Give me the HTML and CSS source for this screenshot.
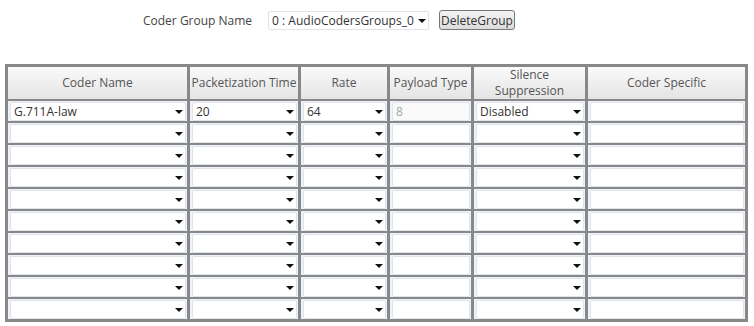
FILE: index.html
```html
<!DOCTYPE html>
<html lang="en">
<head>
  <meta charset="UTF-8" />
  <title>Coder Groups</title>
  <link rel="stylesheet" href="styles.css">
</head>
<body>
  <div class="group-bar">
    <span class="group-label">Coder Group Name</span>
    <div class="sel group-sel"><select><option>0 : AudioCodersGroups_0</option></select></div>
    <button class="del-btn">DeleteGroup</button>
  </div>

  <table class="coders">
    <thead>
      <tr>
        <th class="c-name">Coder Name</th>
        <th class="c-ptime">Packetization Time</th>
        <th class="c-rate">Rate</th>
        <th class="c-payload">Payload Type</th>
        <th class="c-silence">Silence<br>Suppression</th>
        <th class="c-spec">Coder Specific</th>
      </tr>
    </thead>
    <tbody id="rows">
      <tr>
        <td><div class="sel"><select><option>G.711A-law</option></select></div></td>
        <td><div class="sel"><select><option>20</option></select></div></td>
        <td><div class="sel"><select><option>64</option></select></div></td>
        <td><input class="fld" type="text" value="8" disabled></td>
        <td><div class="sel"><select><option>Disabled</option></select></div></td>
        <td><input class="fld" type="text"></td>
      </tr>
    </tbody>
  </table>

  <script>
    // empty rows
    const rows = document.getElementById("rows");
    for (let i = 0; i < 9; i++) {
      const tr = document.createElement("tr");
      tr.innerHTML = `
        <td><div class="sel"><select><option></option></select></div></td>
        <td><div class="sel"><select><option></option></select></div></td>
        <td><div class="sel"><select><option></option></select></div></td>
        <td><input class="fld" type="text"></td>
        <td><div class="sel"><select><option></option></select></div></td>
        <td><input class="fld" type="text"></td>
      `;
      rows.appendChild(tr);
    }
  </script>
</body>
</html>
```

FILE: styles.css
```css
html, body {
  margin: 0;
  padding: 0;
  background: #fff;
  font-family: 'Open Sans', sans-serif;
  font-size: 12px;
  color: #444;
}

.group-bar {
  display: flex;
  align-items: center;
  height: 20px;
  padding: 10px 0 0 143px;
}

.group-label {
  color: #444;
  margin-right: 16px;
}

.group-sel {
  width: 161px;
  height: 19px;
}

.group-sel select {
  border: 1px solid #ccd;
}

.del-btn {
  margin-left: 10px;
  height: 20px;
  padding: 0 1px;
  font-family: 'Open Sans', sans-serif;
  font-size: 12px;
  color: #333;
  background: linear-gradient(#f4f4f4, #dcdcdc);
  border: 1px solid #777;
  border-radius: 3px;
}

.coders {
  margin: 34px 0 0 5px;
  border-collapse: separate;
  border-spacing: 3px 2px;
  background: #888;
  border: 0;
  padding: 1px 0;
}

.coders th {
  height: 32px;
  padding: 0;
  font-weight: normal;
  color: #555;
  line-height: 16px;
  background: linear-gradient(#fafafa, #e4e4e4);
}

.coders td {
  height: 20px;
  padding: 0 1px 0 2px;
  background: #eef2fa;
}

.c-name { width: 179px; }
.c-ptime { width: 108px; }
.c-rate { width: 86px; }
.c-payload { width: 81px; }
.c-silence { width: 111px; }
.c-spec { width: 157px; }

.sel {
  position: relative;
  height: 19px;
}

.sel::after {
  content: "";
  position: absolute;
  right: 3px;
  top: 8px;
  border-left: 4px solid transparent;
  border-right: 4px solid transparent;
  border-top: 4px solid #111;
  pointer-events: none;
}

.sel select,
.fld {
  display: block;
  box-sizing: border-box;
  width: 100%;
  height: 19px;
  margin: 0;
  padding: 0 3px;
  font-family: 'Open Sans', sans-serif;
  font-size: 12px;
  color: #333;
  background: #fff;
  border: 1px solid #dfe3ea;
  border-radius: 2px;
  appearance: none;
  -webkit-appearance: none;
  outline: none;
}

.fld:disabled {
  color: #9aa;
  background: #fafafa;
}
```
